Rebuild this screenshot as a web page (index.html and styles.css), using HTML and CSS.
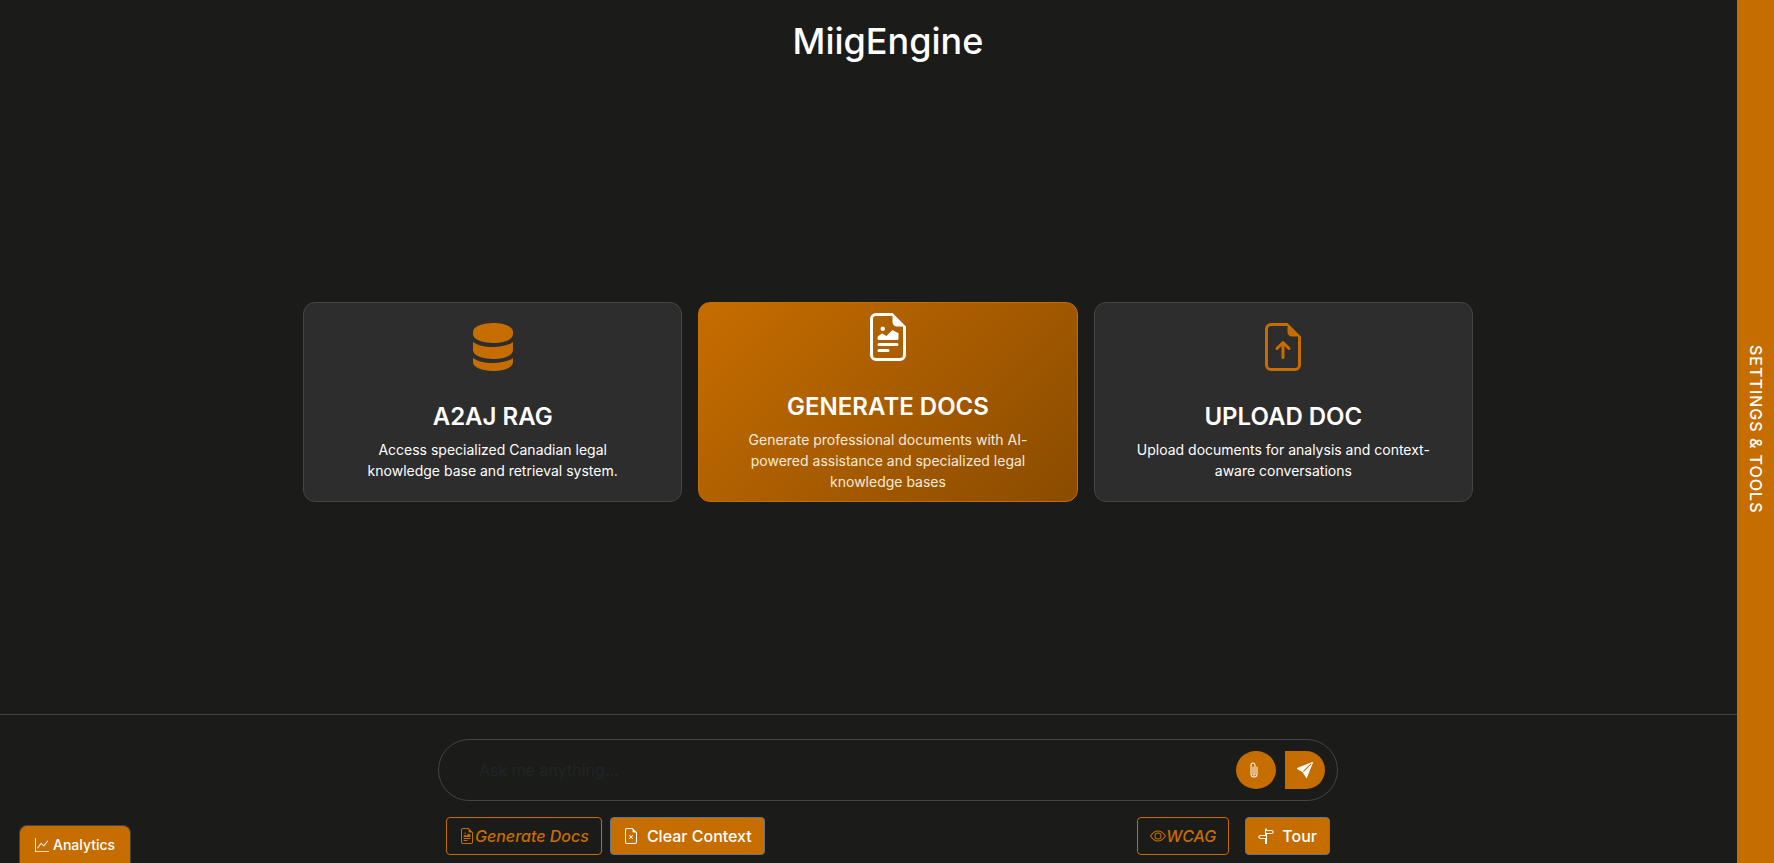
FILE: index.html
```html
<!DOCTYPE html>
<html lang="en">
<head>
<meta charset="utf-8">
<title>MiigEngine</title>
<link rel="stylesheet" href="styles.css">
</head>
<body>
<div class="page">
  <header class="header"><h1 class="title">MiigEngine</h1></header>

  <main class="main">
    <div class="cards">
      <button type="button" class="card">
        <svg class="card-icon" viewBox="0 0 48 48"><path d="M4 9C4 3.500 13 0 24 0S44 3.500 44 9V11C44 16.500 35 20 24 20S4 16.500 4 11Z"/><path d="M4 19C8 22 15 24 24 24S40 22 44 19V27C44 32.500 35 36 24 36S4 32.500 4 27Z"/><path d="M4 35C8 38 15 40 24 40S40 38 44 35V39C44 44.500 35 48 24 48S4 44.500 4 39Z"/></svg>
        <span class="card-title">A2AJ RAG</span>
        <span class="card-text">Access specialized Canadian legal knowledge base and retrieval system.</span>
      </button>
      <button type="button" class="card card-active">
        <svg class="card-icon" viewBox="0 0 16 16"><path d="M14 4.500V14a2 2 0 0 1-2 2H4a2 2 0 0 1-2-2V2a2 2 0 0 1 2-2h5.500zm-3 0A1.500 1.500 0 0 1 9.500 3V1H4a1 1 0 0 0-1 1v12a1 1 0 0 0 1 1h8a1 1 0 0 0 1-1V4.500z"/><path d="M4.500 12.500A.5.5 0 0 1 5 12h3a.5.5 0 0 1 0 1H5a.5.5 0 0 1-.5-.5m0-2A.5.5 0 0 1 5 10h6a.5.5 0 0 1 0 1H5a.5.5 0 0 1-.5-.5m1.639-3.708 1.330.886 1.854-1.855a.25.25 0 0 1 .289-.047l1.888.974V8.500a.5.5 0 0 1-.5.5H5a.5.5 0 0 1-.5-.5V8s1.540-1.274 1.639-1.208M6.250 6a.75.75 0 1 0 0-1.500.75.75 0 0 0 0 1.500"/></svg>
        <span class="card-title">GENERATE DOCS</span>
        <span class="card-text">Generate professional documents with AI-powered assistance and specialized legal knowledge bases</span>
      </button>
      <button type="button" class="card">
        <svg class="card-icon" viewBox="0 0 16 16"><path d="M8.500 11.500a.5.5 0 0 1-1 0V7.707L6.354 8.854a.5.5 0 1 1-.708-.708l2-2a.5.5 0 0 1 .708 0l2 2a.5.5 0 0 1-.708.708L8.500 7.707z"/><path d="M14 14V4.500L9.500 0H4a2 2 0 0 0-2 2v12a2 2 0 0 0 2 2h8a2 2 0 0 0 2-2M9.500 3A1.500 1.500 0 0 0 11 4.500h2V14a1 1 0 0 1-1 1H4a1 1 0 0 1-1-1V2a1 1 0 0 1 1-1h5.500z"/></svg>
        <span class="card-title">UPLOAD DOC</span>
        <span class="card-text">Upload documents for analysis and context-aware conversations</span>
      </button>
    </div>
  </main>

  <footer class="footer">
    <div class="composer">
      <form class="prompt">
        <input class="prompt-input" type="text" aria-label="Message" placeholder="Ask me anything...">
        <button type="button" class="round-button attach" aria-label="Attach file"><svg class="icon" viewBox="0 0 16 16"><path d="M4.500 3a2.500 2.500 0 0 1 5 0v9a1.500 1.500 0 0 1-3 0V5a.5.5 0 0 1 1 0v7a.5.5 0 0 0 1 0V3a1.500 1.500 0 1 0-3 0v9a2.500 2.500 0 0 0 5 0V5a.5.5 0 0 1 1 0v7a3.500 3.500 0 1 1-7 0z"/></svg></button>
        <button type="button" class="round-button send" aria-label="Send"><svg class="icon" viewBox="0 0 16 16"><path d="M15.964.686a.5.5 0 0 0-.65-.65L.767 5.855H.766l-.452.180a.5.5 0 0 0-.082.887l.410.260.001.002 4.995 3.178 3.178 4.995.002.002.260.410a.5.5 0 0 0 .886-.083zm-1.833 1.890L6.637 10.070l-.215-.338a.5.5 0 0 0-.154-.154l-.338-.215 7.494-7.494 1.178-.471z"/></svg></button>
      </form>
      <div class="actions">
        <button type="button" class="action outline"><svg class="icon" viewBox="0 0 16 16"><path d="M14 4.500V14a2 2 0 0 1-2 2H4a2 2 0 0 1-2-2V2a2 2 0 0 1 2-2h5.500zm-3 0A1.500 1.500 0 0 1 9.500 3V1H4a1 1 0 0 0-1 1v12a1 1 0 0 0 1 1h8a1 1 0 0 0 1-1V4.500z"/><path d="M4.500 12.500A.5.5 0 0 1 5 12h3a.5.5 0 0 1 0 1H5a.5.5 0 0 1-.5-.5m0-2A.5.5 0 0 1 5 10h6a.5.5 0 0 1 0 1H5a.5.5 0 0 1-.5-.5m1.639-3.708 1.330.886 1.854-1.855a.25.25 0 0 1 .289-.047l1.888.974V8.500a.5.5 0 0 1-.5.5H5a.5.5 0 0 1-.5-.5V8s1.540-1.274 1.639-1.208M6.250 6a.75.75 0 1 0 0-1.500.75.75 0 0 0 0 1.500"/></svg><span>Generate Docs</span></button>
        <button type="button" class="action solid"><svg class="icon" viewBox="0 0 16 16"><path d="M6.854 7.146a.5.5 0 1 0-.708.708L7.293 9l-1.147 1.146a.5.5 0 0 0 .708.708L8 9.707l1.146 1.147a.5.5 0 0 0 .708-.708L8.707 9l1.147-1.146a.5.5 0 0 0-.708-.708L8 8.293z"/><path d="M14 14V4.500L9.500 0H4a2 2 0 0 0-2 2v12a2 2 0 0 0 2 2h8a2 2 0 0 0 2-2M9.500 3A1.500 1.500 0 0 0 11 4.500h2V14a1 1 0 0 1-1 1H4a1 1 0 0 1-1-1V2a1 1 0 0 1 1-1h5.500z"/></svg><span>Clear Context</span></button>
        <button type="button" class="action outline wcag"><svg class="icon" viewBox="0 0 16 16"><path d="M16 8s-3-5.500-8-5.500S0 8 0 8s3 5.500 8 5.500S16 8 16 8M1.173 8a13 13 0 0 1 1.660-2.043C4.120 4.668 5.880 3.500 8 3.500s3.879 1.168 5.168 2.457A13 13 0 0 1 14.828 8q-.086.130-.195.288c-.335.480-.830 1.120-1.465 1.755C11.879 11.332 10.119 12.500 8 12.500s-3.879-1.168-5.168-2.457A13 13 0 0 1 1.172 8z"/><path d="M8 5.500a2.500 2.500 0 1 0 0 5 2.500 2.500 0 0 0 0-5M4.500 8a3.500 3.500 0 1 1 7 0 3.500 3.500 0 0 1-7 0"/></svg><span>WCAG</span></button>
        <button type="button" class="action solid tour"><svg class="icon" viewBox="0 0 16 16"><path d="M7 7V1.414a1 1 0 0 1 2 0V2h5a1 1 0 0 1 .8.4l.975 1.300a.5.5 0 0 1 0 .6L14.800 5.600a1 1 0 0 1-.8.4H9v10H7v-5H2a1 1 0 0 1-.8-.4L.225 9.300a.5.5 0 0 1 0-.6L1.200 7.400A1 1 0 0 1 2 7zm1 3V8H2l-.75 1L2 10zm0-5h6l.75-1L14 3H8z"/></svg><span>Tour</span></button>
      </div>
    </div>
  </footer>
</div>

<button type="button" class="analytics"><svg class="icon-small" viewBox="0 0 16 16"><path d="M0 0h1v15h15v1H0zm14.817 3.113a.5.5 0 0 1 .070.704l-4.500 5.500a.5.5 0 0 1-.740.037L7.060 6.767l-3.656 5.027a.5.5 0 0 1-.808-.588l4-5.500a.5.5 0 0 1 .758-.060l2.609 2.610 4.150-5.073a.5.5 0 0 1 .704-.070"/></svg><span>Analytics</span></button>
<button type="button" class="drawer-tab">SETTINGS &amp; TOOLS</button>
</body>
</html>
```

FILE: styles.css
```css
* { box-sizing: border-box; }

body {
  margin: 0;
  background: #1b1b19;
  color: #fff;
  font-family: Inter, sans-serif;
  font-size: 16px;
  line-height: 24px;
}

button {
  font: inherit;
  color: inherit;
  cursor: pointer;
}

svg { display: block; fill: currentColor; flex: none; }
.icon { width: 16px; height: 16px; }
.icon-small { width: 14px; height: 14px; }

.page {
  min-height: 100vh;
  display: flex;
  flex-direction: column;
}

.header { padding: 17px 0 0 2px; text-align: center; }

.title {
  margin: 0;
  font-size: 36px;
  line-height: 48px;
  font-weight: 500;
}

.main {
  flex: 1;
  display: flex;
  align-items: center;
  justify-content: center;
  padding: 25px 48px 0 50px;
}

.cards {
  width: 100%;
  max-width: 1170px;
  display: grid;
  grid-template-columns: repeat(3, 1fr);
  gap: 16px;
}

.card {
  min-height: 200px;
  display: flex;
  flex-direction: column;
  align-items: center;
  justify-content: center;
  padding: 0 40px;
  border: 1px solid #444;
  border-radius: 12px;
  background: #2d2d2d;
  text-align: center;
}

.card-active {
  border-color: #c66d00;
  background: linear-gradient(135deg, #c66d00, #8a4b00);
}

.card-icon { width: 48px; height: 48px; margin-bottom: 32px; color: #c66d00; }
.card-active .card-icon { color: #fff; }
.card-title { font-size: 24px; line-height: 28px; font-weight: 600; margin-bottom: 8px; }
.card-text { font-size: 14px; line-height: 21px; }
.card-active .card-text { color: #f7ead9; }

.footer {
  display: flex;
  justify-content: center;
  padding: 24px 48px 8px 50px;
  border-top: 1px solid #444;
}

.composer { width: 100%; max-width: 900px; }

.prompt {
  display: flex;
  align-items: center;
  padding: 11px 12px;
  border: 1px solid #444;
  border-radius: 31px;
}

.prompt-input {
  flex: 1;
  min-width: 0;
  height: 38px;
  padding: 0 28px;
  border: 0;
  outline: 0;
  background: transparent;
  color: #fff;
  font: inherit;
}

.prompt-input::placeholder { color: #212529; opacity: 1; }

.round-button {
  width: 40px;
  height: 38px;
  display: flex;
  align-items: center;
  justify-content: center;
  padding: 0;
  border: 0;
  background: #c66d00;
}

.attach { border-radius: 50%; margin-right: 9px; padding-right: 4px; }
.send { border-radius: 0 20px 20px 0; }

.actions {
  display: flex;
  gap: 8px;
  margin-top: 16px;
  padding: 0 8px;
}

.action {
  height: 38px;
  display: flex;
  align-items: center;
  padding: 0 12px;
  border: 1px solid #c66d00;
  border-radius: 4px;
  background: transparent;
  font-weight: 500;
  white-space: nowrap;
}

.outline { color: #c66d00; font-style: italic; }
.solid { gap: 8px; border-color: #6c757d; background: #c66d00; }
.wcag { margin-left: auto; }
.tour { margin-left: 8px; }

.analytics {
  position: fixed;
  left: 19px;
  bottom: 0;
  height: 38px;
  display: flex;
  align-items: center;
  gap: 4px;
  padding: 0 15px;
  border: 1px solid #444;
  border-bottom: 0;
  border-radius: 8px 8px 0 0;
  background: #c66d00;
  font-size: 14px;
  font-weight: 500;
}

.drawer-tab {
  position: fixed;
  top: 0;
  right: 0;
  bottom: 0;
  width: 37px;
  padding: 0 0 4px;
  border: 0;
  background: #c66d00;
  writing-mode: vertical-rl;
  font-weight: 500;
  letter-spacing: 1px;
}
```
